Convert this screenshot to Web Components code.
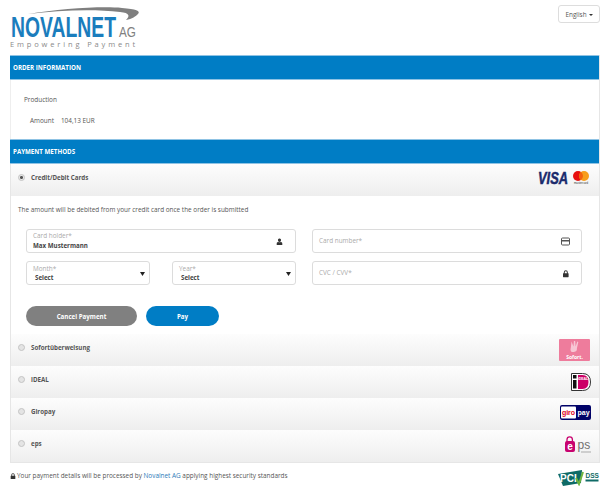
<!DOCTYPE html>
<html>
<head>
<meta charset="utf-8">
<title>Novalnet</title>
<style>
  html, body { margin: 0; padding: 0; background: #fff; }
  body { font-family: "Open Sans", "Liberation Sans", sans-serif; font-size: 6.4px; color: #444; }
</style>
</head>
<body>
<nv-page>
  <nv-top></nv-top>
  <nv-panel>
    <nv-heading>ORDER INFORMATION</nv-heading>
    <nv-order></nv-order>
    <nv-heading>PAYMENT METHODS</nv-heading>
    <nv-method label="Credit/Debit Cards" checked>
      <svg width="53" height="16" viewBox="0 0 53 16" style="margin-bottom:4px">
        <text transform="translate(0 14) scale(.78 1)" font-family="Liberation Sans" font-size="16.500" font-weight="700" font-style="italic" fill="#1a2a6c" stroke="#1a2a6c" stroke-width=".5">VISA</text>
        <circle cx="40" cy="6" r="5" fill="#e8100f"/>
        <circle cx="46" cy="6" r="5" fill="#f79e1b"/>
        <path d="M43 2a5 5 0 0 1 0 8a5 5 0 0 1 0-8z" fill="#f2600f"/>
        <text x="36" y="14" font-family="Liberation Sans" font-size="2.800" fill="#333">mastercard</text>
      </svg>
    </nv-method>
    <nv-card-form></nv-card-form>
    <nv-method label="Sofortüberweisung">
      <svg width="31" height="22" viewBox="0 0 31 22" style="margin-right:1px">
        <rect width="31" height="22" rx="1" fill="#ee7c9c"/>
        <path d="M12.500 2.500l2 5 .4-5.500 1.300 0 .4 5.500 1.700-5 1 .5-1.400 6.500q.4 3-3 3.500t-3.400-2.500l.4-2.500z" fill="#f7c6d4"/>
        <text x="15.500" y="19.500" text-anchor="middle" font-family="Open Sans" font-size="5" font-weight="700" fill="#fff">Sofort.</text>
      </svg>
    </nv-method>
    <nv-method label="iDEAL">
      <svg width="20" height="18" viewBox="0 0 20 18">
        <path d="M.5 .5h11q8 0 8 8.500t-8 8.500h-11z" fill="#fff" stroke="#333" stroke-width="1"/>
        <rect x="2" y="2" width="3.500" height="3.500" fill="#111"/>
        <rect x="2" y="7" width="3.500" height="8.500" fill="#111"/>
        <path d="M7 2h4.500q6 0 6 7t-6 7h-4.500z" fill="#cc0066"/>
        <text x="12" y="6.500" text-anchor="middle" font-family="Liberation Sans" font-size="3.500" font-weight="700" fill="#fff">iDEAL</text>
      </svg>
    </nv-method>
    <nv-method label="Giropay">
      <svg width="31" height="15" viewBox="0 0 31 15" style="margin-bottom:4px">
        <rect width="31" height="15" rx="2" fill="#000268"/>
        <rect x="1" y="1.500" width="15" height="12" rx="1" fill="#fff"/>
        <text x="8.500" y="10" text-anchor="middle" font-family="Liberation Sans" font-size="7" font-weight="700" fill="#e2001a">giro</text>
        <text x="23.500" y="10" text-anchor="middle" font-family="Liberation Sans" font-size="7" font-weight="700" fill="#fff">pay</text>
      </svg>
    </nv-method>
    <nv-method label="eps">
      <svg width="28" height="17" viewBox="0 0 28 17" style="margin:0 -1px 3px 0">
        <path d="M3 6V3.500a2.700 2.700 0 0 1 5.400 0V6" fill="none" stroke="#c8036f" stroke-width="1.300"/>
        <rect x="1" y="5" width="10" height="11" rx="2" fill="#c8036f"/>
        <text x="6" y="14" text-anchor="middle" font-family="Liberation Sans" font-size="10" font-weight="700" fill="#fff">e</text>
        <text x="13.500" y="13" font-family="Liberation Sans" font-size="12" fill="#71706f">ps</text>
        <rect x="17" y="15.500" width="10" height="1" fill="#aaa"/>
      </svg>
    </nv-method>
  </nv-panel>
  <nv-foot></nv-foot>
</nv-page>

<script>
const lockPath = 'M2 4V2.800a2.500 2.500 0 0 1 5 0V4h.5q.5 0 .5.5v4q0 .5-.5.5h-6q-.5 0-.5-.5v-4q0-.5.5-.5zM3.200 4h2.600V2.800a1.300 1.300 0 0 0-2.600 0z';

class NvPage extends HTMLElement {
    constructor() {
        super();
        this.shadowDOM = this.attachShadow({ mode: 'open' });
        this.shadowDOM.innerHTML = `
        <style>
        :host { display: block; width: 605px; height: 495px; overflow: hidden; background: #fff; }
        .wrap { padding: 0 5px 0 10px; }
        </style>
        <div class="wrap"><slot></slot></div>`;
    }
}

class NvTop extends HTMLElement {
    constructor() {
        super();
        this.shadowDOM = this.attachShadow({ mode: 'open' });
        this.shadowDOM.innerHTML = `
        <style>
        :host { display: flex; justify-content: space-between; height: 55px; }
        svg { display: block; }
        button {
            margin: 5px 0 0;
            width: 42px;
            height: 18px;
            padding: 0;
            background: #fff;
            border: 1px solid #ddd;
            border-radius: 3px;
            font: 6.4px "Open Sans", sans-serif;
            color: #555;
        }
        i {
            display: inline-block;
            margin-left: 2px;
            vertical-align: 1px;
            border: 2px solid transparent;
            border-top-color: #333;
            border-bottom: 0;
        }
        </style>
        <svg width="132" height="50" viewBox="0 0 132 50">
          <path d="M18 14C50 9 90 6 112 8c14 1 19 3 16 6c-2 2-6 5-12 6c4-4 4-7-6-8C85 9 50 10 18 14z" fill="#7f7f7f"/>
          <text transform="translate(1 37) scale(.645 1)" font-family="Liberation Sans" font-size="30" font-weight="700" fill="#1b7dbd">NOVALNET</text>
          <text transform="translate(109 37) scale(.78 1)" font-family="Liberation Sans" font-size="15" fill="#808080">AG</text>
          <text x="0" y="46.500" font-family="Open Sans" font-size="7.500" fill="#8a8a8a" letter-spacing="2.850">Empowering Payment</text>
        </svg>
        <button>English<i></i></button>`;
    }
}

class NvPanel extends HTMLElement {
    constructor() {
        super();
        this.shadowDOM = this.attachShadow({ mode: 'open' });
        this.shadowDOM.innerHTML = `
        <style>
        :host { display: block; border: solid #e6e6e6; border-width: 0 1px 1px 0; }
        </style>
        <slot></slot>`;
    }
}

class NvHeading extends HTMLElement {
    constructor() {
        super();
        this.shadowDOM = this.attachShadow({ mode: 'open' });
        this.shadowDOM.innerHTML = `
        <style>
        :host {
            display: flex;
            align-items: center;
            box-sizing: border-box;
            height: 25px;
            padding-left: 3px;
            background: #007dc5;
            border: solid #8fc3e4;
            border-width: 1px 0;
            color: #fff;
            font-size: 6.2px;
            font-weight: 700;
        }
        </style>
        <slot></slot>`;
    }
}

class NvOrder extends HTMLElement {
    constructor() {
        super();
        this.shadowDOM = this.attachShadow({ mode: 'open' });
        this.shadowDOM.innerHTML = `
        <style>
        :host {
            display: block;
            box-sizing: border-box;
            height: 59px;
            padding: 15px 0 0 13px;
            border-left: 1px solid #eee;
            color: #555;
            font-size: 6.4px;
            line-height: 10px;
        }
        .amount { margin: 11px 0 0 6px; display: flex; gap: 7px; }
        </style>
        <div>Production</div>
        <div class="amount"><span>Amount</span><span>104,13 EUR</span></div>`;
    }
}

class NvMethod extends HTMLElement {
    constructor() {
        super();
        this.shadowDOM = this.attachShadow({ mode: 'open' });
        const checked = this.hasAttribute('checked');
        this.shadowDOM.innerHTML = `
        <style>
        :host {
            display: flex;
            align-items: center;
            box-sizing: border-box;
            height: 32px;
            padding: 0 8px 0 7px;
            background: linear-gradient(#fdfdfd, #eeeeee);
            border-left: 1px solid #e6e6e6;
            color: #444;
        }
        .radio {
            box-sizing: border-box;
            width: 7px;
            height: 7px;
            margin-top: -5px;
            border: 1px solid #c4c4c4;
            border-radius: 50%;
            background: ${checked ? 'radial-gradient(circle, #555 0 1.3px, #e8e8e8 1.6px)' : '#e4e4e4'};
        }
        .label { margin: -5px 0 0 6px; font-size: 6.2px; font-weight: 700; color: #555; flex: 1; }
        ::slotted(svg) { display: block; }
        </style>
        <span class="radio"></span>
        <span class="label">${this.getAttribute('label')}</span>
        <slot></slot>`;
    }
}

class NvField extends HTMLElement {
    constructor() {
        super();
        this.shadowDOM = this.attachShadow({ mode: 'open' });
        const value = this.getAttribute('value');
        const icon = this.getAttribute('icon');
        const select = this.hasAttribute('select');
        const icons = {
            user: '<path d="M4.500 1.500a1.500 1.500 0 0 1 1.500 1.800c0 .9-.7 1.700-1.500 1.700s-1.500-.8-1.500-1.700a1.500 1.500 0 0 1 1.500-1.800zM2.300 5.200l1-.3q1.200.8 2.400 0l1 .3q.6.3.6 1.500V8H1.700V6.700q0-1.200.6-1.500z" fill="#333"/>',
            card: '<rect x=".5" y="1" width="8" height="7" rx="1" fill="#fff" stroke="#555"/><rect x="1" y="3" width="7" height="1.500" fill="#555"/>',
            lock: '<path transform="translate(1.200 1) scale(.8)" d="' + lockPath + '" fill="#333"/>',
            caret: '<path d="M2 3h5l-2.500 4z" fill="#222"/>'
        };
        this.shadowDOM.innerHTML = `
        <style>
        :host {
            display: flex;
            align-items: center;
            box-sizing: border-box;
            height: 24px;
            padding: 0 ${select ? 2 : 11}px 0 6px;
            background: #fff;
            border: 1px solid #dcdcdc;
            border-radius: 3px;
            font-size: 6.4px;
        }
        .text { flex: 1; line-height: ${select ? 9 : 10}px; }
        .label { color: #aaa; }
        .value { font-weight: 700; font-size: 6.2px; color: #444; }
        svg { display: block; }
        </style>
        <div class="text">
          <div class="label">${this.getAttribute('label')}</div>
          ${value ? `<div class="value" style="padding-left:${select ? 2 : 0}px">${value}</div>` : ''}
        </div>
        <svg width="9" height="9" viewBox="0 0 9 9">${icons[icon]}</svg>`;
    }
}

class NvCardForm extends HTMLElement {
    constructor() {
        super();
        this.shadowDOM = this.attachShadow({ mode: 'open' });
        this.shadowDOM.innerHTML = `
        <style>
        :host {
            display: block;
            box-sizing: border-box;
            height: 138px;
            padding: 10px 0 0 7px;
            border-left: 1px solid #e6e6e6;
            background: #fff;
        }
        p { margin: 0 0 15px; font-size: 6.4px; line-height: 8px; color: #555; }
        .grid { display: grid; grid-template-columns: 270px 270px; column-gap: 16px; row-gap: 8px; margin-left: 8px; }
        .split { display: grid; grid-template-columns: 124px 124px; column-gap: 22px; }
        .actions { display: flex; gap: 9px; margin: 21px 0 0 8px; }
        button {
            height: 20px;
            border: 0;
            border-radius: 10px;
            color: #fff;
            font: 700 6.2px "Open Sans", sans-serif;
            padding: 0;
        }
        .cancel { width: 111px; background: #808080; }
        .pay { width: 73px; background: #007dc5; }
        </style>
        <p>The amount will be debited from your credit card once the order is submitted</p>
        <div class="grid">
          <nv-field label="Card holder*" value="Max Mustermann" icon="user"></nv-field>
          <nv-field label="Card number*" icon="card"></nv-field>
          <div class="split">
            <nv-field label="Month*" value="Select" icon="caret" select></nv-field>
            <nv-field label="Year*" value="Select" icon="caret" select></nv-field>
          </div>
          <nv-field label="CVC / CVV*" icon="lock"></nv-field>
        </div>
        <div class="actions">
          <button class="cancel">Cancel Payment</button>
          <button class="pay">Pay</button>
        </div>`;
    }
}

class NvFoot extends HTMLElement {
    constructor() {
        super();
        this.shadowDOM = this.attachShadow({ mode: 'open' });
        this.shadowDOM.innerHTML = `
        <style>
        :host {
            display: flex;
            align-items: flex-start;
            justify-content: space-between;
            padding-top: 7px;
            font-size: 6.4px;
            color: #555;
        }
        .note { display: flex; align-items: center; gap: 1px; margin-top: 1px; line-height: 10px; }
        a { color: #2a7ab8; text-decoration: none; }
        svg { display: block; }
        </style>
        <div class="note">
          <svg width="6" height="6" viewBox="0 0 9 9"><path d="${lockPath}" fill="#333"/></svg>
          <span>Your payment details will be processed by <a>Novalnet AG</a> applying highest security standards</span>
        </div>
        <svg width="42" height="16" viewBox="0 0 42 16">
          <path d="M0 4L24 0l-1 13L5 16z" fill="#0f6b66"/>
          <text x="2" y="12" font-family="Liberation Sans" font-size="10" font-weight="700" fill="#fff">PCI</text>
          <path d="M18 8l3 6L25 2" fill="none" stroke="#6db43e" stroke-width="2"/>
          <text x="27.500" y="8" font-family="Liberation Sans" font-size="6.500" font-weight="700" fill="#0f6b66">DSS</text>
          <rect x="27.500" y="9.500" width="13" height="2" fill="#0f6b66"/>
        </svg>`;
    }
}

customElements.define('nv-page', NvPage);
customElements.define('nv-top', NvTop);
customElements.define('nv-panel', NvPanel);
customElements.define('nv-heading', NvHeading);
customElements.define('nv-order', NvOrder);
customElements.define('nv-method', NvMethod);
customElements.define('nv-field', NvField);
customElements.define('nv-card-form', NvCardForm);
customElements.define('nv-foot', NvFoot);
</script>
</body>
</html>
